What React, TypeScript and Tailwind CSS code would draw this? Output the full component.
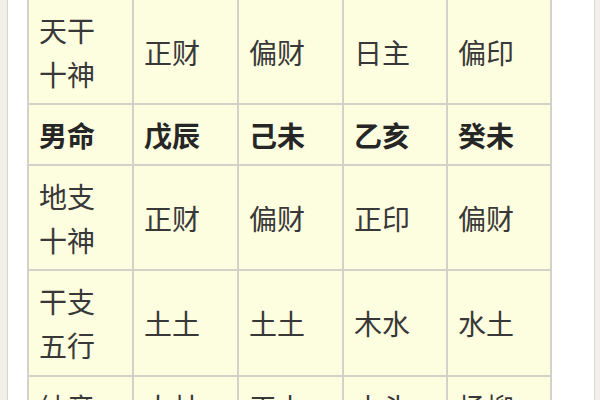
import React from "react";

const rows: { cells: string[]; h: string; bold?: boolean; top?: boolean }[] = [
  { cells: ["天干十神", "正财", "偏财", "日主", "偏印"], h: "h-[103px]" },
  { cells: ["男命", "戊辰", "己未", "乙亥", "癸未"], h: "h-[59px]", bold: true },
  { cells: ["地支十神", "正财", "偏财", "正印", "偏财"], h: "h-[103px]" },
  { cells: ["干支五行", "土土", "土土", "木水", "水土"], h: "h-[104px]" },
  { cells: ["纳音", "大林木", "天上火", "山头火", "杨柳木"], h: "h-[103px]", top: true },
];

export default function App() {
  return (
    <div
      className="flex h-[400px] w-[600px] overflow-hidden bg-[#f3efe9]"
      style={{ fontFamily: '"Noto Sans CJK SC", "Noto Sans", sans-serif' }}
    >
      <div className="ml-[7px] h-full w-[588px] border-x border-[#d9d6d0] bg-white pl-[19px]">
        <div className="grid w-fit grid-cols-[103px_103px_103px_102px_102px] gap-[2px] bg-[#d3d2c8] px-[2px]">
          {rows.map((row, ri) =>
            row.cells.map((c, ci) => (
              <div
                key={`${ri}-${ci}`}
                className={`${row.h} flex ${row.top ? "items-start pt-[8px]" : "items-center"} bg-[#fdfddf] px-[10px] text-[28px] leading-[44px] ${
                  row.bold ? "font-bold text-[#262626]" : "text-[#383838]"
                }`}
              >
                <span className="break-all">{c}</span>
              </div>
            ))
          )}
        </div>
      </div>
    </div>
  );
}
